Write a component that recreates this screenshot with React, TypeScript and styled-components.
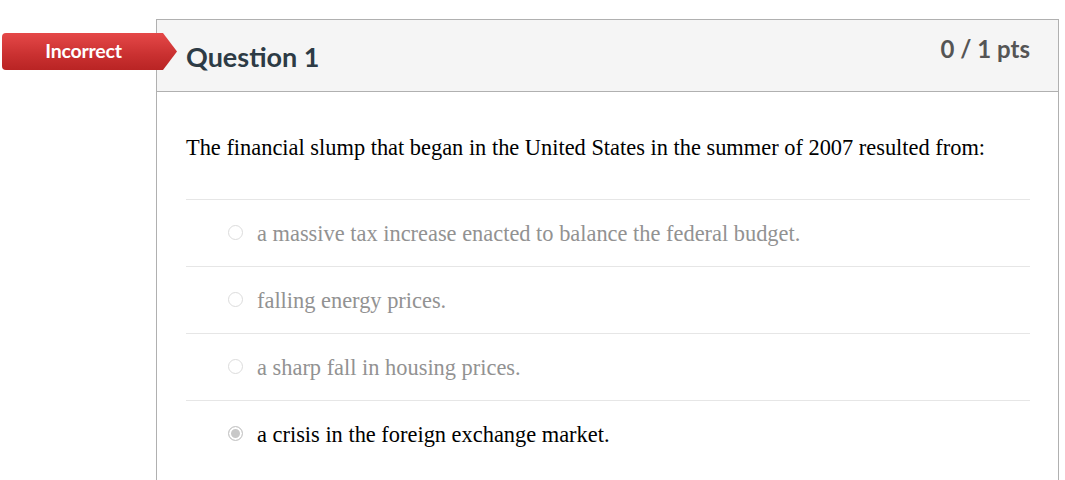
import React from "react";
import styled, { createGlobalStyle } from "styled-components";

interface answerType {
  text: string;
  selected?: boolean;
}

const answers: answerType[] = [
  { text: "a massive tax increase enacted to balance the federal budget." },
  { text: "falling energy prices." },
  { text: "a sharp fall in housing prices." },
  { text: "a crisis in the foreign exchange market.", selected: true },
];

const App = () => {
  return (
    <Page>
      <GlobalStyle />
      <Badge>
        <BadgeText>Incorrect</BadgeText>
      </Badge>
      <Card>
        <Header>
          <Title>Question 1</Title>
          <Points>0 / 1 pts</Points>
        </Header>
        <Body>
          <QuestionText>
            The financial slump that began in the United States in the summer
            of 2007 resulted from:
          </QuestionText>
          <AnswerList>
            {answers.map((a) => (
              <AnswerRow key={a.text}>
                <Radio $checked={!!a.selected} />
                <AnswerText $selected={!!a.selected}>{a.text}</AnswerText>
              </AnswerRow>
            ))}
          </AnswerList>
        </Body>
      </Card>
    </Page>
  );
};

const GlobalStyle = createGlobalStyle`
  body {
    margin: 0;
    background: #fff;
    font-family: "Lato", "Liberation Sans", sans-serif;
  }
`;

const Page = styled.div`
  position: relative;
  padding: 19px 0 0 156px;
  width: 903px;
`;

// label laid over the card's left border
const Badge = styled.div`
  position: absolute;
  left: 2px;
  top: 33px;
  width: 175px;
  height: 37px;
  display: flex;
  align-items: center;
  justify-content: center;
  padding-right: 12px;
  box-sizing: border-box;
  border-radius: 4px 0 0 4px;
  background: linear-gradient(#e54848, #c93030 60%, #b92424);
  clip-path: polygon(0 0, 161px 0, 100% 50%, 161px 100%, 0 100%);
  z-index: 1;
`;

const BadgeText = styled.span`
  color: #fff;
  font-weight: 700;
  font-size: 19.5px;
  margin-top: -3px;
  letter-spacing: -0.2px;
`;

const Card = styled.div`
  border: 1px solid #b0b0b0;
  border-bottom: none;
  height: 470px;
  box-sizing: border-box;
`;

const Header = styled.div`
  display: flex;
  justify-content: space-between;
  align-items: flex-start;
  height: 72px;
  box-sizing: border-box;
  padding: 0 28px 0 29px;
  background: #f5f5f5;
  border-bottom: 1px solid #b0b0b0;
`;

const Title = styled.h2`
  margin: 19px 0 0;
  font-size: 27px;
  line-height: 36px;
  font-weight: 700;
  color: #2d3b45;
`;

const Points = styled.div`
  margin-top: 14px;
  font-size: 24px;
  line-height: 30px;
  font-weight: 700;
  color: #555;
`;

const Body = styled.div`
  padding: 41px 28px 0 29px;
`;

const QuestionText = styled.div`
  font-family: "Liberation Serif", "Times New Roman", serif;
  font-size: 22.4px;
  line-height: 30px;
  color: #000;
  margin-bottom: 36px;
`;

const AnswerList = styled.div`
  display: flex;
  flex-direction: column;
`;

const AnswerRow = styled.div`
  display: flex;
  align-items: center;
  gap: 14px;
  padding: 19px 0 17px 42px;
  border-top: 1px solid #e6e6e6;
`;

const Radio = styled.span<{ $checked: boolean }>`
  width: 15px;
  height: 15px;
  flex: none;
  box-sizing: border-box;
  border-radius: 50%;
  margin-top: -3px;
  border: 1px solid ${(p) => (p.$checked ? "#c8c8c8" : "#dcdcdc")};
  background: ${(p) => (p.$checked ? "#c8c8c8" : "#fff")};
  box-shadow: ${(p) => (p.$checked ? "inset 0 0 0 2px #fff" : "none")};
`;

const AnswerText = styled.span<{ $selected: boolean }>`
  font-family: "Liberation Serif", "Times New Roman", serif;
  font-size: 22.4px;
  line-height: 30px;
  color: ${(p) => (p.$selected ? "#000" : "#929292")};
`;

export default App;
